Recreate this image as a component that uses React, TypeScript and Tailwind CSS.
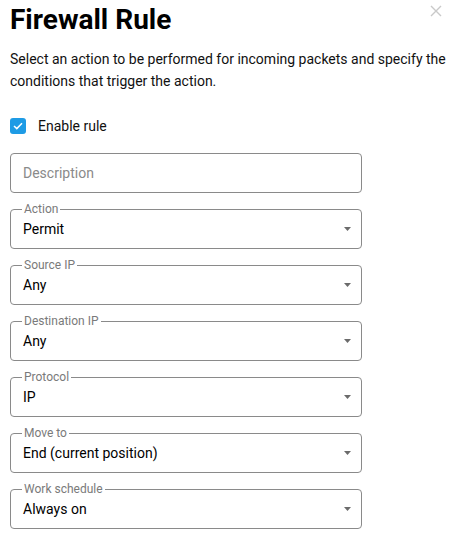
import { ReactNode } from "react";

const fields = [
  { label: "Action", value: "Permit" },
  { label: "Source IP", value: "Any" },
  { label: "Destination IP", value: "Any" },
  { label: "Protocol", value: "IP" },
  { label: "Move to", value: "End (current position)" },
  { label: "Work schedule", value: "Always on" },
];

function Outlined({ label, children }: { label?: string; children: ReactNode }) {
  return (
    <div className="relative flex h-[40px] w-[352px] items-center rounded-[4px] border border-[#8a8a8a] pl-[12px] pr-[10px]">
      {label ? (
        <span className="absolute -top-[8px] left-[11px] bg-white px-[2px] text-[12px] leading-[14px] text-[#7a7a7a]">
          {label}
        </span>
      ) : null}
      {children}
    </div>
  );
}

function Caret() {
  return (
    <svg width="7" height="4" viewBox="0 0 7 4" className="ml-auto shrink-0" aria-hidden="true">
      <path d="M0 0 L7 0 L3.5 4 Z" fill="#6b6b6b" />
    </svg>
  );
}

export default function App() {
  return (
    <div className="relative min-h-[538px] bg-white pl-[10px] pr-[4px] text-[#111]" style={{ fontFamily: "Roboto, 'Liberation Sans', sans-serif" }}>
      <button type="button" className="absolute right-[11px] top-[5px] p-0" aria-label="Close">
        <svg width="12" height="12" viewBox="0 0 12 12" aria-hidden="true">
          <path d="M1 1 L11 11 M11 1 L1 11" stroke="#c9c9c9" strokeWidth="1.4" />
        </svg>
      </button>

      <h1 className="pt-[3px] text-[28px] font-bold leading-[34px] text-black">Firewall Rule</h1>

      <p className="mt-[11px] text-[14px] leading-[22px] text-[#111]">
        Select an action to be performed for incoming packets and specify the conditions that trigger the action.
      </p>

      <label className="mt-[24px] flex items-center gap-[12px]">
        <span className="flex h-[16px] w-[16px] items-center justify-center rounded-[3px] bg-[#1e9be5]">
          <svg width="10" height="8" viewBox="0 0 10 8" aria-hidden="true">
            <path d="M1 4 L3.8 6.6 L9 1.2" stroke="white" strokeWidth="1.5" fill="none" />
          </svg>
        </span>
        <span className="text-[14px] leading-[20px]">Enable rule</span>
      </label>

      <div className="mt-[17px] flex flex-col gap-[16px]">
        <Outlined>
          <span className="text-[14px] text-[#8a8a8a]">Description</span>
        </Outlined>
        {fields.map((f) => (
          <Outlined key={f.label} label={f.label}>
            <span className="text-[14px] text-black">{f.value}</span>
            <Caret />
          </Outlined>
        ))}
      </div>
    </div>
  );
}
